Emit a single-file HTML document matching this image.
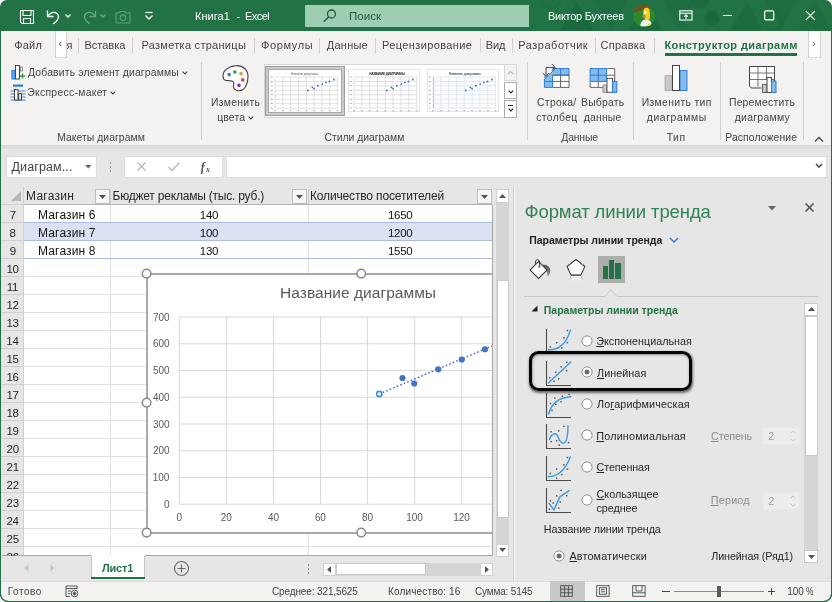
<!DOCTYPE html>
<html lang="ru"><head><meta charset="utf-8"><title>Excel</title>
<style>
html,body{margin:0;padding:0;}
body{width:832px;height:602px;position:relative;overflow:hidden;background:#fff;font-family:"Liberation Sans", sans-serif;}
#w div,#w span.t,#w svg{position:absolute;}
#w{position:absolute;left:0;top:0;width:832px;height:602px;overflow:hidden;will-change:transform;}
u{text-decoration:underline;text-underline-offset:1px;}
</style></head><body><div id="w">
<div style="left:0px;top:0px;width:832px;height:602px;background:#fff;"></div>
<div style="left:0px;top:0px;width:832px;height:31px;background:#217346;"></div>
<div style="left:0px;top:31px;width:832px;height:113.5px;background:#f3f2f1;"></div>
<div style="left:0px;top:144.5px;width:832px;height:5px;background:linear-gradient(#d6d6d6,#e6e6e6);"></div>
<div style="left:0px;top:149.5px;width:832px;height:432px;background:#e6e6e6;"></div>
<div style="left:0px;top:581px;width:832px;height:21px;background:#f3f2f1;"></div>
<svg style="left:19px;top:9px" width="16" height="16" viewBox="0 0 16 16" fill="none" stroke="#fff" stroke-width="1.1">
<path d="M1.5 1.5h13v13H3l-1.5-1.5z"/><path d="M4 1.5v5h8v-5"/><path d="M4.5 14.5v-5h7v5"/></svg>
<svg style="left:45px;top:8px" width="30" height="18" viewBox="0 0 30 18" fill="none" stroke="#fff" stroke-width="1.3">
<path d="M2.5 2.5v6h6"/><path d="M2.8 8.2C5 4.5 9 3.2 12 5.5c3 2.6 1.5 7-4 10.5"/><path d="M20.5 6.5l2.5 2.5 2.500-2.500" stroke-width="1.4"/></svg>
<svg style="left:80px;top:8px;opacity:.35" width="30" height="18" viewBox="0 0 30 18" fill="none" stroke="#fff" stroke-width="1.3">
<path d="M15.5 2.5v6h-6"/><path d="M15.200 8.2C13 4.5 9 3.2 6 5.5c-3 2.600-1.500 7 4 10.500"/><path d="M20.500 6.500l2.500 2.500 2.500-2.500" stroke-width="1.4"/></svg>
<svg style="left:115px;top:10px;opacity:.3" width="16" height="14" viewBox="0 0 16 14" fill="none" stroke="#fff" stroke-width="1.1">
<path d="M1 3h3l1-1.500h5L11 3h4v10H1z"/><circle cx="8" cy="7.700" r="2.800"/></svg>
<svg style="left:143px;top:11px" width="12" height="10" viewBox="0 0 12 10" fill="none" stroke="#fff" stroke-width="1.3">
<path d="M2.500 1.500h7"/><path d="M2.500 4.500l3.500 3.500 3.500-3.500"/></svg>
<span class="t" style="left:195.00px;top:8.00px;font-size:11px;line-height:16px;color:#fff;font-weight:400;letter-spacing:0.050px;white-space:pre;">Книга1</span>
<span class="t" style="left:236.50px;top:8.00px;font-size:11px;line-height:16px;color:#fff;font-weight:400;letter-spacing:0.000px;white-space:pre;">-</span>
<span class="t" style="left:245.00px;top:8.00px;font-size:11px;line-height:16px;color:#fff;font-weight:400;letter-spacing:-0.562px;white-space:pre;">Excel</span>
<svg style="left:520px;top:0" width="312" height="31" viewBox="520 0 312 31" fill="none">
<g fill="#1a663b" opacity=".8">
<path d="M560 31l17-29 17 29z"/><path d="M628 31l17-29 17 29z" opacity=".6"/><path d="M662 0l17 29 17-29z" opacity=".5"/>
<path d="M730 31l17-29 17 29z" opacity=".6"/><path d="M764 0l17 29 17-29z" opacity=".45"/><path d="M798 31l17-29 17 29z" opacity=".5"/>
<path d="M594 0l17 29 17-29z" opacity=".4"/>
<circle cx="712" cy="18" r="7.500"/><circle cx="700" cy="0" r="9" opacity=".6"/>
</g>
<circle cx="773" cy="21" r="9" stroke="#1b6a3e" stroke-width="2.500" opacity=".5"/>
<circle cx="551" cy="-2" r="10" stroke="#1b6a3e" stroke-width="2.500" opacity=".4"/>
</svg>
<div style="left:305px;top:5px;width:224px;height:22px;background:#9fcdb3;"></div>
<svg style="left:322px;top:8px" width="16" height="16" viewBox="0 0 16 16" fill="none" stroke="#1d5c3c" stroke-width="1.3">
<circle cx="9.500" cy="6" r="4"/><path d="M6.600 9L1.800 13.800"/></svg>
<span class="t" style="left:349.00px;top:8.00px;font-size:11.5px;line-height:16px;color:#1d5c3c;font-weight:400;letter-spacing:0.062px;white-space:pre;">Поиск</span>
<span class="t" style="left:548.00px;top:8.00px;font-size:11px;line-height:16px;color:#fff;font-weight:400;letter-spacing:-0.269px;white-space:pre;">Виктор Бухтеев</span>
<svg style="left:633px;top:5.200px" width="22" height="22" viewBox="0 0 22 22">
<defs><clipPath id="av"><circle cx="11" cy="11" r="10.900"/></clipPath></defs>
<g clip-path="url(#av)"><rect width="22" height="22" fill="#2c8a2c"/>
<path d="M0 0h22v5.500c-3-2-7-2.500-10-1.500S4 6.500 0 8z" fill="#7a4a25"/>
<ellipse cx="13.500" cy="7" rx="3.200" ry="4.200" fill="#f7d21f"/>
<path d="M10.300 8.500c0 3 1 5 3 6.500l3-.5c.8-2.500.8-5 .3-7z" fill="#f7d21f"/>
<ellipse cx="11" cy="11.300" rx="1.800" ry="1.500" fill="#b98a4a"/>
<circle cx="12.300" cy="7.600" r="1.300" fill="#fff"/>
<path d="M7.500 21.500c-.5-3.500 1.500-6.500 4.500-7l3.500.3c2.500 1.200 3.500 3.700 2.500 6.200z" fill="#f0f0f4"/>
<ellipse cx="16.200" cy="19.800" rx="1.700" ry="1.300" fill="#f7d21f"/></g></svg>
<svg style="left:679px;top:10px" width="14" height="11" viewBox="0 0 14 11" fill="none" stroke="#fff" stroke-width="1.100">
<rect x="0.800" y="0.800" width="12.200" height="9.200"/><path d="M0.800 3.200h12.200"/><path d="M7 8.800v-3.800M5.200 6.700l1.800-1.800 1.800 1.800"/></svg>
<div style="left:723.3px;top:14.6px;width:9px;height:1.2px;background:#fff;"></div>
<svg style="left:763px;top:9px" width="13" height="13" viewBox="0 0 13 13" fill="none" stroke="#fff" stroke-width="1.200"><rect x="1.700" y="1.900" width="9" height="9" rx="1"/></svg>
<svg style="left:804px;top:9px" width="13" height="13" viewBox="0 0 13 13" fill="none" stroke="#fff" stroke-width="1.200"><path d="M1.900 2.100l9 8.800M10.900 2.100l-9 8.800"/></svg>
<span class="t" style="left:14.25px;top:37.00px;font-size:11px;line-height:16px;color:#444;font-weight:400;letter-spacing:0.167px;white-space:pre;">Файл</span>
<span class="t" style="left:66.40px;top:37.00px;font-size:11px;line-height:16px;color:#444;font-weight:400;letter-spacing:0.000px;white-space:pre;">я</span>
<div style="left:55.3px;top:31px;width:12.2px;height:27.2px;background:#fff;box-sizing:border-box;border-left:1.300px solid #d0d0d0;border-right:1.300px solid #d0d0d0;border-bottom:1px solid #dcdcdc;"></div>
<span class="t" style="left:58.38px;top:35.00px;font-size:11px;line-height:16px;color:#555;font-weight:400;letter-spacing:0.000px;white-space:pre;">‹</span>
<div style="left:78px;top:38px;width:1px;height:15px;background:#d2d0ce;"></div>
<span class="t" style="left:84.50px;top:37.00px;font-size:11px;line-height:16px;color:#444;font-weight:400;letter-spacing:0.000px;white-space:pre;">Вставка</span>
<div style="left:132px;top:38px;width:1px;height:15px;background:#d2d0ce;"></div>
<span class="t" style="left:141.50px;top:37.00px;font-size:11px;line-height:16px;color:#444;font-weight:400;letter-spacing:0.281px;white-space:pre;">Разметка страницы</span>
<div style="left:254px;top:38px;width:1px;height:15px;background:#d2d0ce;"></div>
<span class="t" style="left:261.00px;top:37.00px;font-size:11px;line-height:16px;color:#444;font-weight:400;letter-spacing:0.625px;white-space:pre;">Формулы</span>
<div style="left:319px;top:38px;width:1px;height:15px;background:#d2d0ce;"></div>
<span class="t" style="left:326.75px;top:37.00px;font-size:11px;line-height:16px;color:#444;font-weight:400;letter-spacing:0.250px;white-space:pre;">Данные</span>
<div style="left:375px;top:38px;width:1px;height:15px;background:#d2d0ce;"></div>
<span class="t" style="left:382.00px;top:37.00px;font-size:11px;line-height:16px;color:#444;font-weight:400;letter-spacing:0.385px;white-space:pre;">Рецензирование</span>
<div style="left:480px;top:38px;width:1px;height:15px;background:#d2d0ce;"></div>
<span class="t" style="left:485.75px;top:37.00px;font-size:11px;line-height:16px;color:#444;font-weight:400;letter-spacing:-0.125px;white-space:pre;">Вид</span>
<div style="left:512px;top:38px;width:1px;height:15px;background:#d2d0ce;"></div>
<span class="t" style="left:518.25px;top:37.00px;font-size:11px;line-height:16px;color:#444;font-weight:400;letter-spacing:0.525px;white-space:pre;">Разработчик</span>
<div style="left:594.5px;top:38px;width:1px;height:15px;background:#d2d0ce;"></div>
<span class="t" style="left:600.50px;top:37.00px;font-size:11px;line-height:16px;color:#444;font-weight:400;letter-spacing:0.250px;white-space:pre;">Справка</span>
<div style="left:653.5px;top:38px;width:1px;height:15px;background:#d2d0ce;"></div>
<span class="t" style="left:664.50px;top:37.00px;font-size:11px;line-height:16px;color:#217346;font-weight:700;letter-spacing:0.408px;white-space:pre;">Конструктор диаграмм</span>
<div style="left:665px;top:53px;width:132px;height:3px;background:#217346;"></div>
<div style="left:808.3px;top:31px;width:12.4px;height:27.2px;background:#fff;box-sizing:border-box;border-left:1.300px solid #d0d0d0;border-right:1.300px solid #d0d0d0;border-bottom:1px solid #dcdcdc;"></div>
<span class="t" style="left:811.88px;top:35.00px;font-size:11px;line-height:16px;color:#555;font-weight:400;letter-spacing:0.000px;white-space:pre;">›</span>
<svg style="left:11px;top:63px" width="15" height="17" viewBox="0 0 15 17" fill="none">
<rect x="0.900" y="7.500" width="3.200" height="8.500" fill="#5aa6ec" stroke="#2b7cd3" stroke-width=".9"/><rect x="4.500" y="2.500" width="4" height="13.500" fill="#fff" stroke="#444" stroke-width="1"/>
<rect x="9.500" y="4" width="2" height="4" fill="#fff" stroke="#777" stroke-width=".8"/>
<path d="M11.500 10.500v5M9 13h5" stroke="#2e9e4b" stroke-width="1.300"/></svg>
<span class="t" style="left:28.00px;top:65.00px;font-size:10.4px;line-height:16px;color:#444;font-weight:400;letter-spacing:0.160px;white-space:pre;">Добавить элемент диаграммы</span>
<svg style="left:181.5px;top:70.5px" width="6" height="4" viewBox="0 0 6 4" fill="none" stroke="#444" stroke-width="1.100"><path d="M0.600 0.600l2.300 2.300 2.300-2.300"/></svg>
<svg style="left:10px;top:84px" width="16" height="17" viewBox="0 0 16 17" fill="none">
<rect x="3" y="0.500" width="10" height="2.200" fill="#2b7cd3"/>
<path d="M0.500 7h15M0.500 10h15M0.500 13h15M0.500 16h15" stroke="#2b7cd3" stroke-width=".9"/>
<rect x="4.500" y="5.500" width="3.500" height="10.500" fill="#fff" stroke="#444" stroke-width="1"/>
<rect x="8.500" y="9.500" width="3" height="6.500" fill="#ddd" stroke="#444" stroke-width="1"/></svg>
<span class="t" style="left:27.25px;top:85.00px;font-size:10.4px;line-height:16px;color:#444;font-weight:400;letter-spacing:0.288px;white-space:pre;">Экспресс-макет</span>
<svg style="left:110.0px;top:90.5px" width="6" height="4" viewBox="0 0 6 4" fill="none" stroke="#444" stroke-width="1.100"><path d="M0.600 0.600l2.300 2.300 2.300-2.300"/></svg>
<span class="t" style="left:57.25px;top:130.00px;font-size:10.4px;line-height:16px;color:#444;font-weight:400;letter-spacing:0.036px;white-space:pre;">Макеты диаграмм</span>
<div style="left:201px;top:62px;width:1px;height:78px;background:#d2d0ce;"></div>
<svg style="left:220px;top:63px" width="30" height="30" viewBox="0 0 30 30" fill="none">
<path d="M3 13C3 8 8 3.200 16 2.700C23 2.300 28 7 28 13.500C28 20 25 27.500 19.500 27.700C16 27.800 13.500 26 13.500 23.500C13.500 21.500 14.500 20.500 13.500 19C12 17 8 18 5.500 17.300C3.800 16.800 3 15 3 13Z" fill="#fff" stroke="#444" stroke-width="1.100"/>
<circle cx="9.200" cy="11.600" r="1.800" fill="#2b7cd3"/><circle cx="14.900" cy="9" r="1.800" fill="#2e9e4b"/>
<circle cx="21" cy="10.700" r="1.800" fill="#e8912d"/><circle cx="22.800" cy="16.900" r="1.800" fill="#e8403a"/><circle cx="19" cy="22.400" r="1.800" fill="#8e2fb5"/></svg>
<span class="t" style="left:211.00px;top:95.00px;font-size:10.4px;line-height:16px;color:#444;font-weight:400;letter-spacing:0.286px;white-space:pre;">Изменить</span>
<span class="t" style="left:217.25px;top:110.00px;font-size:10.4px;line-height:16px;color:#444;font-weight:400;letter-spacing:0.125px;white-space:pre;">цвета</span>
<svg style="left:248.0px;top:115.5px" width="6" height="4" viewBox="0 0 6 4" fill="none" stroke="#444" stroke-width="1.100"><path d="M0.600 0.600l2.300 2.300 2.300-2.300"/></svg>
<div style="left:264px;top:64px;width:253px;height:54px;background:#fff;box-sizing:border-box;border:1px solid #d6d6d6;"></div>
<div style="left:265.0px;top:65.9px;width:79.7px;height:50px;background:#cbcbcb;box-sizing:border-box;border:1px solid #9c9c9c;"></div>
<div style="left:268.3px;top:68.8px;width:73.5px;height:44.1px;background:#fff;box-sizing:border-box;border:1px solid #a9a9a9;"></div>
<svg style="left:274.8px;top:76.5px;overflow:visible" width="62.6" height="31.1" viewBox="0 0 62.6 31.1"><g stroke="#d4d4d4" stroke-width=".7" fill="none"><path d="M0 0.00h62.6" /><path d="M0 4.44h62.6" /><path d="M0 8.89h62.6" /><path d="M0 13.33h62.6" /><path d="M0 17.77h62.6" /><path d="M0 22.21h62.6" /><path d="M0 26.66h62.6" /><path d="M0 31.10h62.6" /><path d="M0.00 0v31.1" /><path d="M7.83 0v31.1" /><path d="M15.65 0v31.1" /><path d="M23.48 0v31.1" /><path d="M31.30 0v31.1" /><path d="M39.12 0v31.1" /><path d="M46.95 0v31.1" /><path d="M54.77 0v31.1" /><path d="M62.60 0v31.1" /></g><rect x="-4.200" y="-0.40" width="2" height=".8" fill="#9a9a9a"/><rect x="-4.200" y="4.04" width="2" height=".8" fill="#9a9a9a"/><rect x="-4.200" y="8.49" width="2" height=".8" fill="#9a9a9a"/><rect x="-4.200" y="12.93" width="2" height=".8" fill="#9a9a9a"/><rect x="-4.200" y="17.37" width="2" height=".8" fill="#9a9a9a"/><rect x="-4.200" y="21.81" width="2" height=".8" fill="#9a9a9a"/><rect x="-4.200" y="26.26" width="2" height=".8" fill="#9a9a9a"/><rect x="-4.200" y="30.70" width="2" height=".8" fill="#9a9a9a"/><rect x="-1.00" y="33.4" width="2" height=".8" fill="#9a9a9a"/><rect x="6.83" y="33.4" width="2" height=".8" fill="#9a9a9a"/><rect x="14.65" y="33.4" width="2" height=".8" fill="#9a9a9a"/><rect x="22.48" y="33.4" width="2" height=".8" fill="#9a9a9a"/><rect x="30.30" y="33.4" width="2" height=".8" fill="#9a9a9a"/><rect x="38.12" y="33.4" width="2" height=".8" fill="#9a9a9a"/><rect x="45.95" y="33.4" width="2" height=".8" fill="#9a9a9a"/><rect x="53.77" y="33.4" width="2" height=".8" fill="#9a9a9a"/><rect x="61.60" y="33.4" width="2" height=".8" fill="#9a9a9a"/><circle cx="32.8" cy="13.5" r="0.950" fill="#4472c4"/><circle cx="37.4" cy="10.4" r="0.950" fill="#4472c4"/><circle cx="39.1" cy="11.6" r="0.950" fill="#4472c4"/><circle cx="42.8" cy="8.8" r="0.950" fill="#4472c4"/><circle cx="47.2" cy="7.1" r="0.950" fill="#4472c4"/><circle cx="50.9" cy="5.4" r="0.950" fill="#4472c4"/><circle cx="54.4" cy="4.5" r="0.950" fill="#4472c4"/><circle cx="58.9" cy="2.5" r="0.950" fill="#4472c4"/></svg>
<span class="t" style="left:290.85px;top:66.00px;font-size:3px;line-height:16px;color:#666;font-weight:400;letter-spacing:-0.147px;white-space:pre;line-height:6px;margin-top:5px;">Название диаграммы</span>
<div style="left:347.59999999999997px;top:69.3px;width:72px;height:42.8px;background:#fff;box-sizing:border-box;border:1px solid #e6e6e6;"></div>
<svg style="left:353.9px;top:76.5px;overflow:visible" width="62.6" height="31.1" viewBox="0 0 62.6 31.1"><g stroke="#d4d4d4" stroke-width=".7" fill="none"><path d="M0 0.00h62.6" /><path d="M0 4.44h62.6" /><path d="M0 8.89h62.6" /><path d="M0 13.33h62.6" /><path d="M0 17.77h62.6" /><path d="M0 22.21h62.6" /><path d="M0 26.66h62.6" /><path d="M0 31.10h62.6" /><path d="M0.00 0v31.1" /><path d="M7.83 0v31.1" /><path d="M15.65 0v31.1" /><path d="M23.48 0v31.1" /><path d="M31.30 0v31.1" /><path d="M39.12 0v31.1" /><path d="M46.95 0v31.1" /><path d="M54.77 0v31.1" /><path d="M62.60 0v31.1" /></g><rect x="-4.200" y="-0.40" width="2" height=".8" fill="#9a9a9a"/><rect x="-4.200" y="4.04" width="2" height=".8" fill="#9a9a9a"/><rect x="-4.200" y="8.49" width="2" height=".8" fill="#9a9a9a"/><rect x="-4.200" y="12.93" width="2" height=".8" fill="#9a9a9a"/><rect x="-4.200" y="17.37" width="2" height=".8" fill="#9a9a9a"/><rect x="-4.200" y="21.81" width="2" height=".8" fill="#9a9a9a"/><rect x="-4.200" y="26.26" width="2" height=".8" fill="#9a9a9a"/><rect x="-4.200" y="30.70" width="2" height=".8" fill="#9a9a9a"/><rect x="-1.00" y="33.4" width="2" height=".8" fill="#9a9a9a"/><rect x="6.83" y="33.4" width="2" height=".8" fill="#9a9a9a"/><rect x="14.65" y="33.4" width="2" height=".8" fill="#9a9a9a"/><rect x="22.48" y="33.4" width="2" height=".8" fill="#9a9a9a"/><rect x="30.30" y="33.4" width="2" height=".8" fill="#9a9a9a"/><rect x="38.12" y="33.4" width="2" height=".8" fill="#9a9a9a"/><rect x="45.95" y="33.4" width="2" height=".8" fill="#9a9a9a"/><rect x="53.77" y="33.4" width="2" height=".8" fill="#9a9a9a"/><rect x="61.60" y="33.4" width="2" height=".8" fill="#9a9a9a"/><circle cx="32.8" cy="13.5" r="0.950" fill="#4472c4"/><circle cx="37.4" cy="10.4" r="0.950" fill="#4472c4"/><circle cx="39.1" cy="11.6" r="0.950" fill="#4472c4"/><circle cx="42.8" cy="8.8" r="0.950" fill="#4472c4"/><circle cx="47.2" cy="7.1" r="0.950" fill="#4472c4"/><circle cx="50.9" cy="5.4" r="0.950" fill="#4472c4"/><circle cx="54.4" cy="4.5" r="0.950" fill="#4472c4"/><circle cx="58.9" cy="2.5" r="0.950" fill="#4472c4"/></svg>
<span class="t" style="left:369.15px;top:66.00px;font-size:3px;line-height:16px;color:#222;font-weight:700;letter-spacing:-0.118px;white-space:pre;line-height:6px;margin-top:5px;">НАЗВАНИЕ ДИАГРАММЫ</span>
<div style="left:426.7px;top:69.3px;width:72px;height:42.8px;background:#fff;box-sizing:border-box;border:1px solid #e6e6e6;"></div>
<svg style="left:433px;top:76.5px;overflow:visible" width="62.6" height="31.1" viewBox="0 0 62.6 31.1"><rect width="62.6" height="31.1" fill="#fbfcfe"/><path d="M0.600 0v31.1" stroke="#8497b0" stroke-width=".7"/><g stroke="#dae0ea" stroke-width=".7" fill="none"><path d="M0 0.00h62.6" /><path d="M0 4.44h62.6" /><path d="M0 8.89h62.6" /><path d="M0 13.33h62.6" /><path d="M0 17.77h62.6" /><path d="M0 22.21h62.6" /><path d="M0 26.66h62.6" /><path d="M0 31.10h62.6" /><path d="M0.00 0v31.1" /><path d="M7.83 0v31.1" /><path d="M15.65 0v31.1" /><path d="M23.48 0v31.1" /><path d="M31.30 0v31.1" /><path d="M39.12 0v31.1" /><path d="M46.95 0v31.1" /><path d="M54.77 0v31.1" /><path d="M62.60 0v31.1" /></g><rect x="-4.200" y="-0.40" width="2" height=".8" fill="#9a9a9a"/><rect x="-4.200" y="4.04" width="2" height=".8" fill="#9a9a9a"/><rect x="-4.200" y="8.49" width="2" height=".8" fill="#9a9a9a"/><rect x="-4.200" y="12.93" width="2" height=".8" fill="#9a9a9a"/><rect x="-4.200" y="17.37" width="2" height=".8" fill="#9a9a9a"/><rect x="-4.200" y="21.81" width="2" height=".8" fill="#9a9a9a"/><rect x="-4.200" y="26.26" width="2" height=".8" fill="#9a9a9a"/><rect x="-4.200" y="30.70" width="2" height=".8" fill="#9a9a9a"/><rect x="-1.00" y="33.4" width="2" height=".8" fill="#9a9a9a"/><rect x="6.83" y="33.4" width="2" height=".8" fill="#9a9a9a"/><rect x="14.65" y="33.4" width="2" height=".8" fill="#9a9a9a"/><rect x="22.48" y="33.4" width="2" height=".8" fill="#9a9a9a"/><rect x="30.30" y="33.4" width="2" height=".8" fill="#9a9a9a"/><rect x="38.12" y="33.4" width="2" height=".8" fill="#9a9a9a"/><rect x="45.95" y="33.4" width="2" height=".8" fill="#9a9a9a"/><rect x="53.77" y="33.4" width="2" height=".8" fill="#9a9a9a"/><rect x="61.60" y="33.4" width="2" height=".8" fill="#9a9a9a"/><circle cx="32.8" cy="13.5" r="0.950" fill="#4472c4"/><circle cx="37.4" cy="10.4" r="0.950" fill="#4472c4"/><circle cx="39.1" cy="11.6" r="0.950" fill="#4472c4"/><circle cx="42.8" cy="8.8" r="0.950" fill="#4472c4"/><circle cx="47.2" cy="7.1" r="0.950" fill="#4472c4"/><circle cx="50.9" cy="5.4" r="0.950" fill="#4472c4"/><circle cx="54.4" cy="4.5" r="0.950" fill="#4472c4"/><circle cx="58.9" cy="2.5" r="0.950" fill="#4472c4"/></svg>
<span class="t" style="left:449.05px;top:66.00px;font-size:3px;line-height:16px;color:#44546a;font-weight:700;letter-spacing:-0.032px;white-space:pre;line-height:6px;margin-top:5px;">Название диаграммы</span>
<div style="left:504px;top:64px;width:13px;height:17px;background:#f3f2f1;box-sizing:border-box;border:1px solid #d6d6d6;"></div>
<div style="left:504px;top:82.3px;width:13px;height:17.2px;background:#fff;box-sizing:border-box;border:1px solid #ababab;"></div>
<div style="left:504px;top:100px;width:13px;height:18px;background:#fff;box-sizing:border-box;border:1px solid #ababab;"></div>
<svg style="left:507px;top:70px" width="7" height="5" viewBox="0 0 7 5" fill="none" stroke="#bbb" stroke-width="1.200"><path d="M0.800 4.200l2.700-2.700 2.700 2.700"/></svg>
<svg style="left:507.7px;top:89.8px" width="6" height="4" viewBox="0 0 6 4" fill="none" stroke="#222" stroke-width="1.100"><path d="M0.600 0.600l2.300 2.300 2.300-2.300"/></svg>
<div style="left:507.6px;top:104.5px;width:5.4px;height:1.3px;background:#222;"></div>
<svg style="left:507.7px;top:107.5px" width="6" height="4" viewBox="0 0 6 4" fill="none" stroke="#222" stroke-width="1.100"><path d="M0.600 0.600l2.300 2.300 2.300-2.300"/></svg>
<span class="t" style="left:324.50px;top:130.00px;font-size:10.4px;line-height:16px;color:#444;font-weight:400;letter-spacing:-0.019px;white-space:pre;">Стили диаграмм</span>
<div style="left:526.5px;top:62px;width:1px;height:78px;background:#d2d0ce;"></div>
<svg style="left:540px;top:62px" width="32" height="28" viewBox="540 62 32 28" fill="none">
<rect x="544.400" y="68.600" width="24.600" height="18.800" fill="#fff"/>
<path d="M544.400 68.600H555.500L544.400 79.500z" fill="#f3f2f1"/><path d="M552.600 68.600H569v6.600H552.600z" fill="#83bbea"/><path d="M544.400 75.200h8.200v12.200h-8.200z" fill="#83bbea"/>
<path d="M544.400 79.500L555.500 68.600H552.600V75.200H544.400z" fill="#83bbea"/>
<path d="M552.600 68.600H569V75.200H552.600M552.600 75.200V87.400M544.400 81.400H552.600M560.600 68.600V75.200M544.400 79V87.400H552.600" stroke="#2b7cd3" stroke-width="1"/>
<path d="M569 75.200V87.400H552.600M552.600 81.400H569M560.600 75.200V87.400M552.600 75.200H569" stroke="#666" stroke-width="1"/>
<path d="M544.400 79.500L555.500 68.600" stroke="#2b7cd3" stroke-width=".9"/>
<path d="M546 76.300V67.400H555M542.700 73l3.300 3.300 3.300-3.300M551.800 64.100l3.300 3.300-3.300 3.300" stroke="#444" stroke-width="1"/></svg>
<span class="t" style="left:537.00px;top:95.00px;font-size:10.4px;line-height:16px;color:#444;font-weight:400;letter-spacing:0.333px;white-space:pre;">Строка/</span>
<span class="t" style="left:536.25px;top:110.00px;font-size:10.4px;line-height:16px;color:#444;font-weight:400;letter-spacing:0.333px;white-space:pre;">столбец</span>
<svg style="left:588px;top:66px" width="32" height="28" viewBox="588 66 32 28" fill="none">
<rect x="590.100" y="68.600" width="24.600" height="18.800" fill="#fff"/>
<rect x="590.100" y="68.600" width="16.500" height="12.800" fill="#83bbea"/>
<path d="M606.600 68.600H614.700V87.400H590.100V81.400M606.600 75.200H614.700M598.300 81.400V87.400M606.600 81.400H614.700" stroke="#666" stroke-width="1"/>
<path d="M590.100 68.600H606.600V81.400H590.100zM598.300 68.600V81.400M590.100 75.200H606.600" stroke="#2b7cd3" stroke-width="1"/>
<rect x="603" y="85" width="4" height="7.300" fill="#c8c8c8" stroke="#8a8a8a" stroke-width=".9"/>
<rect x="607" y="78.400" width="5.600" height="13.900" fill="#fff" stroke="#555" stroke-width="1"/>
<rect x="612.600" y="81.400" width="4.200" height="10.900" fill="#83bbea" stroke="#2b7cd3" stroke-width="1"/></svg>
<span class="t" style="left:581.00px;top:95.00px;font-size:10.4px;line-height:16px;color:#444;font-weight:400;letter-spacing:0.200px;white-space:pre;">Выбрать</span>
<span class="t" style="left:583.75px;top:110.00px;font-size:10.4px;line-height:16px;color:#444;font-weight:400;letter-spacing:0.200px;white-space:pre;">данные</span>
<span class="t" style="left:561.25px;top:130.00px;font-size:10.4px;line-height:16px;color:#444;font-weight:400;letter-spacing:-0.150px;white-space:pre;">Данные</span>
<div style="left:633px;top:62px;width:1px;height:78px;background:#d2d0ce;"></div>
<svg style="left:664px;top:64px" width="24" height="28" viewBox="0 0 24 28" fill="none">
<rect x="1" y="11.700" width="7" height="14.800" fill="#c8c8c8" stroke="#a5a5a5" stroke-width=".8"/>
<rect x="16" y="6.500" width="7" height="20" fill="#83bbea" stroke="#2b7cd3" stroke-width="1"/>
<rect x="8.500" y="1.500" width="7" height="25" fill="#fff" stroke="#444" stroke-width="1"/></svg>
<span class="t" style="left:641.65px;top:95.00px;font-size:10.4px;line-height:16px;color:#444;font-weight:400;letter-spacing:0.345px;white-space:pre;">Изменить тип</span>
<span class="t" style="left:646.80px;top:110.00px;font-size:10.4px;line-height:16px;color:#444;font-weight:400;letter-spacing:0.575px;white-space:pre;">диаграммы</span>
<span class="t" style="left:666.75px;top:130.00px;font-size:10.4px;line-height:16px;color:#444;font-weight:400;letter-spacing:0.475px;white-space:pre;">Тип</span>
<div style="left:719.5px;top:62px;width:1px;height:78px;background:#d2d0ce;"></div>
<svg style="left:748px;top:65px" width="30" height="29" viewBox="0 0 30 29" fill="none">
<path d="M1.500 1.500h25v16l0 0h-19l-6 4z" fill="#fff"/>
<path d="M1.500 1.500h25v19M1.500 1.500v19.500l2 2h10" stroke="#444" stroke-width="1"/>
<path d="M1.500 8h25M1.500 14.500h25M10 1.500v20M18.500 1.500v13" stroke="#666" stroke-width=".9"/>
<rect x="14.500" y="19.500" width="4.500" height="8" fill="#c8c8c8" stroke="#666" stroke-width="1"/>
<rect x="19" y="12.500" width="4.500" height="15" fill="#fff" stroke="#444" stroke-width="1"/>
<rect x="23.500" y="16" width="4.500" height="11.500" fill="#83bbea" stroke="#2b7cd3" stroke-width="1"/></svg>
<span class="t" style="left:728.95px;top:95.00px;font-size:10.4px;line-height:16px;color:#444;font-weight:400;letter-spacing:0.220px;white-space:pre;">Переместить</span>
<span class="t" style="left:734.70px;top:110.00px;font-size:10.4px;line-height:16px;color:#444;font-weight:400;letter-spacing:0.300px;white-space:pre;">диаграмму</span>
<span class="t" style="left:725.25px;top:130.00px;font-size:10.4px;line-height:16px;color:#444;font-weight:400;letter-spacing:0.100px;white-space:pre;">Расположение</span>
<div style="left:803px;top:62px;width:1px;height:78px;background:#d2d0ce;"></div>
<svg style="left:813.500px;top:135.800px" width="10" height="7" viewBox="0 0 10 7" fill="none" stroke="#444" stroke-width="1.300"><path d="M1 5.500l4-4 4 4"/></svg>
<div style="left:6px;top:155.5px;width:91px;height:22px;background:#fff;box-sizing:border-box;border:1px solid #dcdcdc;"></div>
<span class="t" style="left:11.50px;top:159.00px;font-size:12.5px;line-height:16px;color:#444;font-weight:400;letter-spacing:0.117px;white-space:pre;">Диаграм...</span>
<svg style="left:84.500px;top:164.500px" width="7" height="4" viewBox="0 0 7 4"><path d="M0 0h6.500l-3.250 3.500z" fill="#666"/></svg>
<div style="left:109.5px;top:162px;width:1.5px;height:1.5px;background:#a0a0a0;"></div>
<div style="left:109.5px;top:166px;width:1.5px;height:1.5px;background:#a0a0a0;"></div>
<div style="left:109.5px;top:170px;width:1.5px;height:1.5px;background:#a0a0a0;"></div>
<div style="left:124px;top:155.5px;width:98.5px;height:22px;background:#fff;box-sizing:border-box;border:1px solid #dcdcdc;"></div>
<svg style="left:136px;top:161px" width="11" height="11" viewBox="0 0 11 11" fill="none" stroke="#b8b8b8" stroke-width="1.300"><path d="M1.500 1.500l8 8M9.500 1.500l-8 8"/></svg>
<svg style="left:167px;top:161px" width="14" height="11" viewBox="0 0 14 11" fill="none" stroke="#b8b8b8" stroke-width="1.300"><path d="M1.500 6l3.500 3.500L12.500 1.500"/></svg>
<span class="t" style="left:200.75px;top:159.00px;font-size:12px;line-height:16px;color:#555;font-weight:700;letter-spacing:0.000px;white-space:pre;font-style:italic;font-family:Liberation Serif,serif;">f</span>
<span class="t" style="left:206.12px;top:162.00px;font-size:8px;line-height:16px;color:#555;font-weight:700;letter-spacing:0.000px;white-space:pre;font-style:italic;font-family:Liberation Serif,serif;">x</span>
<div style="left:226px;top:155.5px;width:601px;height:22px;background:#fff;box-sizing:border-box;border:1px solid #dcdcdc;"></div>
<svg style="left:815px;top:163px" width="8" height="6" viewBox="0 0 8 6" fill="none" stroke="#444" stroke-width="1.400"><path d="M1 1l3 3 3-3"/></svg>
<div style="left:0px;top:187px;width:493px;height:369px;background:#fff;"></div>
<div style="left:0px;top:187px;width:493px;height:18px;background:#e6e6e6;"></div>
<div style="left:0px;top:187px;width:24px;height:369px;background:#e6e6e6;"></div>
<div style="left:24px;top:222.5px;width:468px;height:18px;background:#d9e1f2;"></div>
<div style="left:24px;top:204px;width:468px;height:1px;background:#e1e1e1;"></div>
<div style="left:0px;top:204px;width:24px;height:1px;background:#cfcfcf;"></div>
<div style="left:24px;top:222px;width:468px;height:1px;background:#e1e1e1;"></div>
<div style="left:0px;top:222px;width:24px;height:1px;background:#cfcfcf;"></div>
<div style="left:24px;top:240px;width:468px;height:1px;background:#e1e1e1;"></div>
<div style="left:0px;top:240px;width:24px;height:1px;background:#cfcfcf;"></div>
<div style="left:24px;top:258px;width:468px;height:1px;background:#e1e1e1;"></div>
<div style="left:0px;top:258px;width:24px;height:1px;background:#cfcfcf;"></div>
<div style="left:24px;top:276px;width:468px;height:1px;background:#e1e1e1;"></div>
<div style="left:0px;top:276px;width:24px;height:1px;background:#cfcfcf;"></div>
<div style="left:24px;top:294px;width:468px;height:1px;background:#e1e1e1;"></div>
<div style="left:0px;top:294px;width:24px;height:1px;background:#cfcfcf;"></div>
<div style="left:24px;top:312px;width:468px;height:1px;background:#e1e1e1;"></div>
<div style="left:0px;top:312px;width:24px;height:1px;background:#cfcfcf;"></div>
<div style="left:24px;top:330px;width:468px;height:1px;background:#e1e1e1;"></div>
<div style="left:0px;top:330px;width:24px;height:1px;background:#cfcfcf;"></div>
<div style="left:24px;top:348px;width:468px;height:1px;background:#e1e1e1;"></div>
<div style="left:0px;top:348px;width:24px;height:1px;background:#cfcfcf;"></div>
<div style="left:24px;top:366px;width:468px;height:1px;background:#e1e1e1;"></div>
<div style="left:0px;top:366px;width:24px;height:1px;background:#cfcfcf;"></div>
<div style="left:24px;top:384px;width:468px;height:1px;background:#e1e1e1;"></div>
<div style="left:0px;top:384px;width:24px;height:1px;background:#cfcfcf;"></div>
<div style="left:24px;top:402px;width:468px;height:1px;background:#e1e1e1;"></div>
<div style="left:0px;top:402px;width:24px;height:1px;background:#cfcfcf;"></div>
<div style="left:24px;top:420px;width:468px;height:1px;background:#e1e1e1;"></div>
<div style="left:0px;top:420px;width:24px;height:1px;background:#cfcfcf;"></div>
<div style="left:24px;top:438px;width:468px;height:1px;background:#e1e1e1;"></div>
<div style="left:0px;top:438px;width:24px;height:1px;background:#cfcfcf;"></div>
<div style="left:24px;top:456px;width:468px;height:1px;background:#e1e1e1;"></div>
<div style="left:0px;top:456px;width:24px;height:1px;background:#cfcfcf;"></div>
<div style="left:24px;top:474px;width:468px;height:1px;background:#e1e1e1;"></div>
<div style="left:0px;top:474px;width:24px;height:1px;background:#cfcfcf;"></div>
<div style="left:24px;top:492px;width:468px;height:1px;background:#e1e1e1;"></div>
<div style="left:0px;top:492px;width:24px;height:1px;background:#cfcfcf;"></div>
<div style="left:24px;top:510px;width:468px;height:1px;background:#e1e1e1;"></div>
<div style="left:0px;top:510px;width:24px;height:1px;background:#cfcfcf;"></div>
<div style="left:24px;top:528px;width:468px;height:1px;background:#e1e1e1;"></div>
<div style="left:0px;top:528px;width:24px;height:1px;background:#cfcfcf;"></div>
<div style="left:24px;top:546px;width:468px;height:1px;background:#e1e1e1;"></div>
<div style="left:0px;top:546px;width:24px;height:1px;background:#cfcfcf;"></div>
<div style="left:23.3px;top:187px;width:1px;height:369px;background:#cfcfcf;"></div>
<div style="left:110.4px;top:205px;width:1px;height:351px;background:#e1e1e1;"></div>
<div style="left:307.6px;top:205px;width:1px;height:351px;background:#e1e1e1;"></div>
<div style="left:110.4px;top:190px;width:1px;height:15px;background:#cfcfcf;"></div>
<div style="left:307.6px;top:190px;width:1px;height:15px;background:#cfcfcf;"></div>
<div style="left:24px;top:204px;width:468px;height:1px;background:#b4b4b4;"></div>
<div style="left:110.4px;top:223px;width:1px;height:18px;background:#d9e1f2;"></div>
<div style="left:307.6px;top:223px;width:1px;height:18px;background:#d9e1f2;"></div>
<div style="left:24px;top:222px;width:468px;height:1px;background:#a9bde4;"></div>
<div style="left:24px;top:240px;width:468px;height:1px;background:#a9bde4;"></div>
<div style="left:24px;top:258px;width:468px;height:1px;background:#a9bde4;"></div>
<div style="left:492px;top:205px;width:1px;height:351px;background:#a6a6a6;"></div>
<div style="left:2px;top:555px;width:491px;height:1px;background:#a6a6a6;"></div>
<svg style="left:10.800px;top:191.200px" width="10" height="10" viewBox="0 0 10 10"><path d="M10 0v10H0z" fill="#b7b7b7"/></svg>
<span class="t" style="left:26.00px;top:188.00px;font-size:12px;line-height:16px;color:#262626;font-weight:400;letter-spacing:0.250px;white-space:pre;">Магазин</span>
<span class="t" style="left:112.50px;top:188.00px;font-size:12px;line-height:16px;color:#262626;font-weight:400;letter-spacing:-0.210px;white-space:pre;">Бюджет рекламы (тыс. руб.)</span>
<span class="t" style="left:310.00px;top:188.00px;font-size:12px;line-height:16px;color:#262626;font-weight:400;letter-spacing:-0.155px;white-space:pre;">Количество посетителей</span>
<div style="left:94.5px;top:188.75px;width:15px;height:15px;background:#f4f6f9;box-sizing:border-box;border:1px solid #bdbdbd;"></div>
<svg style="left:98.5px;top:195px" width="7" height="4" viewBox="0 0 7 4"><path d="M0 0h7l-3.500 4z" fill="#555"/></svg>
<div style="left:292px;top:188.75px;width:15px;height:15px;background:#f4f6f9;box-sizing:border-box;border:1px solid #bdbdbd;"></div>
<svg style="left:296px;top:195px" width="7" height="4" viewBox="0 0 7 4"><path d="M0 0h7l-3.500 4z" fill="#555"/></svg>
<div style="left:476.5px;top:188.75px;width:15px;height:15px;background:#f4f6f9;box-sizing:border-box;border:1px solid #bdbdbd;"></div>
<svg style="left:480.5px;top:195px" width="7" height="4" viewBox="0 0 7 4"><path d="M0 0h7l-3.500 4z" fill="#555"/></svg>
<span class="t" style="left:9.68px;top:207.00px;font-size:11.5px;line-height:16px;color:#262626;font-weight:400;letter-spacing:0.000px;white-space:pre;">7</span>
<span class="t" style="left:9.55px;top:225.00px;font-size:11.5px;line-height:16px;color:#262626;font-weight:400;letter-spacing:0.000px;white-space:pre;">8</span>
<span class="t" style="left:9.68px;top:243.00px;font-size:11.5px;line-height:16px;color:#262626;font-weight:400;letter-spacing:0.000px;white-space:pre;">9</span>
<span class="t" style="left:6.45px;top:261.00px;font-size:11.5px;line-height:16px;color:#262626;font-weight:400;letter-spacing:-0.300px;white-space:pre;">10</span>
<span class="t" style="left:6.83px;top:279.00px;font-size:11.5px;line-height:16px;color:#262626;font-weight:400;letter-spacing:-0.300px;white-space:pre;">11</span>
<span class="t" style="left:6.45px;top:297.00px;font-size:11.5px;line-height:16px;color:#262626;font-weight:400;letter-spacing:-0.300px;white-space:pre;">12</span>
<span class="t" style="left:6.45px;top:315.00px;font-size:11.5px;line-height:16px;color:#262626;font-weight:400;letter-spacing:-0.300px;white-space:pre;">13</span>
<span class="t" style="left:6.33px;top:333.00px;font-size:11.5px;line-height:16px;color:#262626;font-weight:400;letter-spacing:-0.300px;white-space:pre;">14</span>
<span class="t" style="left:6.45px;top:351.00px;font-size:11.5px;line-height:16px;color:#262626;font-weight:400;letter-spacing:-0.300px;white-space:pre;">15</span>
<span class="t" style="left:6.45px;top:369.00px;font-size:11.5px;line-height:16px;color:#262626;font-weight:400;letter-spacing:-0.300px;white-space:pre;">16</span>
<span class="t" style="left:6.45px;top:387.00px;font-size:11.5px;line-height:16px;color:#262626;font-weight:400;letter-spacing:-0.300px;white-space:pre;">17</span>
<span class="t" style="left:6.45px;top:405.00px;font-size:11.5px;line-height:16px;color:#262626;font-weight:400;letter-spacing:-0.300px;white-space:pre;">18</span>
<span class="t" style="left:6.45px;top:423.00px;font-size:11.5px;line-height:16px;color:#262626;font-weight:400;letter-spacing:-0.300px;white-space:pre;">19</span>
<span class="t" style="left:6.58px;top:441.00px;font-size:11.5px;line-height:16px;color:#262626;font-weight:400;letter-spacing:-0.300px;white-space:pre;">20</span>
<span class="t" style="left:6.58px;top:459.00px;font-size:11.5px;line-height:16px;color:#262626;font-weight:400;letter-spacing:-0.300px;white-space:pre;">21</span>
<span class="t" style="left:6.58px;top:477.00px;font-size:11.5px;line-height:16px;color:#262626;font-weight:400;letter-spacing:-0.300px;white-space:pre;">22</span>
<span class="t" style="left:6.58px;top:495.00px;font-size:11.5px;line-height:16px;color:#262626;font-weight:400;letter-spacing:-0.300px;white-space:pre;">23</span>
<span class="t" style="left:6.45px;top:513.00px;font-size:11.5px;line-height:16px;color:#262626;font-weight:400;letter-spacing:-0.300px;white-space:pre;">24</span>
<span class="t" style="left:6.58px;top:531.00px;font-size:11.5px;line-height:16px;color:#262626;font-weight:400;letter-spacing:-0.300px;white-space:pre;">25</span>
<span class="t" style="left:6.58px;top:549.00px;font-size:11.5px;line-height:16px;color:#262626;font-weight:400;letter-spacing:-0.300px;white-space:pre;clip-path:inset(0 0 9px 0);">26</span>
<span class="t" style="left:38.00px;top:207.00px;font-size:12px;line-height:16px;color:#111;font-weight:400;letter-spacing:0.156px;white-space:pre;">Магазин 6</span>
<span class="t" style="left:199.80px;top:207.00px;font-size:11.5px;line-height:16px;color:#111;font-weight:400;letter-spacing:-0.250px;white-space:pre;">140</span>
<span class="t" style="left:387.88px;top:207.00px;font-size:11.5px;line-height:16px;color:#111;font-weight:400;letter-spacing:-0.250px;white-space:pre;">1650</span>
<span class="t" style="left:38.00px;top:225.00px;font-size:12px;line-height:16px;color:#111;font-weight:400;letter-spacing:0.156px;white-space:pre;">Магазин 7</span>
<span class="t" style="left:199.80px;top:225.00px;font-size:11.5px;line-height:16px;color:#111;font-weight:400;letter-spacing:-0.250px;white-space:pre;">100</span>
<span class="t" style="left:387.88px;top:225.00px;font-size:11.5px;line-height:16px;color:#111;font-weight:400;letter-spacing:-0.250px;white-space:pre;">1200</span>
<span class="t" style="left:38.00px;top:243.00px;font-size:12px;line-height:16px;color:#111;font-weight:400;letter-spacing:0.156px;white-space:pre;">Магазин 8</span>
<span class="t" style="left:199.80px;top:243.00px;font-size:11.5px;line-height:16px;color:#111;font-weight:400;letter-spacing:-0.250px;white-space:pre;">130</span>
<span class="t" style="left:387.88px;top:243.00px;font-size:11.5px;line-height:16px;color:#111;font-weight:400;letter-spacing:-0.250px;white-space:pre;">1550</span>
<div style="left:146px;top:273px;width:347px;height:260px;background:#fff;"></div>
<div style="left:146px;top:273px;width:347px;height:1.5px;background:#a9a9a9;"></div>
<div style="left:146px;top:532px;width:347px;height:1.5px;background:#a9a9a9;"></div>
<div style="left:146px;top:273px;width:1.5px;height:260px;background:#a9a9a9;"></div>
<svg style="left:0;top:0;" width="832" height="602" viewBox="0 0 832 602"><defs><clipPath id="cc"><rect x="146" y="273" width="346" height="260"/></clipPath></defs><g clip-path="url(#cc)"><path d="M179.25 317.00H492" stroke="#d9d9d9" stroke-width="1" fill="none"/><path d="M179.25 343.75H492" stroke="#d9d9d9" stroke-width="1" fill="none"/><path d="M179.25 370.50H492" stroke="#d9d9d9" stroke-width="1" fill="none"/><path d="M179.25 397.25H492" stroke="#d9d9d9" stroke-width="1" fill="none"/><path d="M179.25 424.00H492" stroke="#d9d9d9" stroke-width="1" fill="none"/><path d="M179.25 450.75H492" stroke="#d9d9d9" stroke-width="1" fill="none"/><path d="M179.25 477.50H492" stroke="#d9d9d9" stroke-width="1" fill="none"/><path d="M179.25 504.25H492" stroke="#d9d9d9" stroke-width="1" fill="none"/><path d="M179.25 317.0V504.25" stroke="#d9d9d9" stroke-width="1" fill="none"/><path d="M226.33 317.0V504.25" stroke="#d9d9d9" stroke-width="1" fill="none"/><path d="M273.41 317.0V504.25" stroke="#d9d9d9" stroke-width="1" fill="none"/><path d="M320.49 317.0V504.25" stroke="#d9d9d9" stroke-width="1" fill="none"/><path d="M367.57 317.0V504.25" stroke="#d9d9d9" stroke-width="1" fill="none"/><path d="M414.65 317.0V504.25" stroke="#d9d9d9" stroke-width="1" fill="none"/><path d="M461.73 317.0V504.25" stroke="#d9d9d9" stroke-width="1" fill="none"/><path d="M379.250 394L494 345.200" stroke="#4472c4" stroke-width="1.500" stroke-dasharray="1.600 2.200" fill="none"/><circle cx="402.5" cy="378" r="3.100" fill="#4472c4"/><circle cx="414.25" cy="383.5" r="3.100" fill="#4472c4"/><circle cx="438.25" cy="369.25" r="3.100" fill="#4472c4"/><circle cx="461.75" cy="359.5" r="3.100" fill="#4472c4"/><circle cx="485" cy="349.25" r="3.100" fill="#4472c4"/><circle cx="379.250" cy="394" r="2.600" fill="#fff" stroke="#3d8edb" stroke-width="1.600"/></g><circle cx="146.6" cy="273.6" r="4.300" fill="#fff" stroke="#8a8a8a" stroke-width="1.500"/><circle cx="361.25" cy="273.6" r="4.300" fill="#fff" stroke="#8a8a8a" stroke-width="1.500"/><circle cx="146.6" cy="402.6" r="4.300" fill="#fff" stroke="#8a8a8a" stroke-width="1.500"/><circle cx="146.6" cy="532.6" r="4.300" fill="#fff" stroke="#8a8a8a" stroke-width="1.500"/><circle cx="361.25" cy="532.6" r="4.300" fill="#fff" stroke="#8a8a8a" stroke-width="1.500"/></svg>
<span class="t" style="left:280.05px;top:285.00px;font-size:15.5px;line-height:16px;color:#595959;font-weight:400;letter-spacing:0.041px;white-space:pre;">Название диаграммы</span>
<div style="left:492px;top:273px;width:1px;height:283px;background:#a6a6a6;"></div>
<span class="t" style="left:152.97px;top:310.00px;font-size:10px;line-height:16px;color:#595959;font-weight:400;letter-spacing:-0.100px;white-space:pre;">700</span>
<span class="t" style="left:152.97px;top:336.00px;font-size:10px;line-height:16px;color:#595959;font-weight:400;letter-spacing:-0.100px;white-space:pre;">600</span>
<span class="t" style="left:152.97px;top:363.00px;font-size:10px;line-height:16px;color:#595959;font-weight:400;letter-spacing:-0.100px;white-space:pre;">500</span>
<span class="t" style="left:153.10px;top:390.00px;font-size:10px;line-height:16px;color:#595959;font-weight:400;letter-spacing:-0.100px;white-space:pre;">400</span>
<span class="t" style="left:152.97px;top:417.00px;font-size:10px;line-height:16px;color:#595959;font-weight:400;letter-spacing:-0.100px;white-space:pre;">300</span>
<span class="t" style="left:152.97px;top:443.00px;font-size:10px;line-height:16px;color:#595959;font-weight:400;letter-spacing:-0.100px;white-space:pre;">200</span>
<span class="t" style="left:152.85px;top:470.00px;font-size:10px;line-height:16px;color:#595959;font-weight:400;letter-spacing:-0.100px;white-space:pre;">100</span>
<span class="t" style="left:163.88px;top:497.00px;font-size:10px;line-height:16px;color:#595959;font-weight:400;letter-spacing:0.000px;white-space:pre;">0</span>
<span class="t" style="left:176.38px;top:510.00px;font-size:10px;line-height:16px;color:#595959;font-weight:400;letter-spacing:0.000px;white-space:pre;">0</span>
<span class="t" style="left:220.75px;top:510.00px;font-size:10px;line-height:16px;color:#595959;font-weight:400;letter-spacing:-0.100px;white-space:pre;">20</span>
<span class="t" style="left:267.96px;top:510.00px;font-size:10px;line-height:16px;color:#595959;font-weight:400;letter-spacing:-0.100px;white-space:pre;">40</span>
<span class="t" style="left:314.92px;top:510.00px;font-size:10px;line-height:16px;color:#595959;font-weight:400;letter-spacing:-0.100px;white-space:pre;">60</span>
<span class="t" style="left:362.00px;top:510.00px;font-size:10px;line-height:16px;color:#595959;font-weight:400;letter-spacing:-0.100px;white-space:pre;">80</span>
<span class="t" style="left:406.25px;top:510.00px;font-size:10px;line-height:16px;color:#595959;font-weight:400;letter-spacing:-0.100px;white-space:pre;">100</span>
<span class="t" style="left:453.33px;top:510.00px;font-size:10px;line-height:16px;color:#595959;font-weight:400;letter-spacing:-0.100px;white-space:pre;">120</span>
<div style="left:496px;top:203px;width:13px;height:341px;background:#d4d4d4;"></div>
<div style="left:496px;top:189px;width:13px;height:14px;background:#fff;box-sizing:border-box;border:1px solid #d0d0d0;"></div>
<svg style="left:499px;top:194px" width="7" height="4" viewBox="0 0 7 4"><path d="M0 4h7l-3.500-4z" fill="#555"/></svg>
<div style="left:496.5px;top:279.5px;width:12px;height:238px;background:#fff;box-sizing:border-box;border:1px solid #c9c9c9;"></div>
<div style="left:496px;top:543.5px;width:13px;height:13px;background:#fff;box-sizing:border-box;border:1px solid #d0d0d0;"></div>
<svg style="left:499px;top:548px" width="7" height="4" viewBox="0 0 7 4"><path d="M0 0h7l-3.500 4z" fill="#555"/></svg>
<div style="left:91px;top:555px;width:53.5px;height:23px;background:#fff;"></div>
<div style="left:91px;top:577px;width:53.5px;height:2px;background:#217346;"></div>
<div style="left:90.5px;top:556px;width:1px;height:21px;background:#c4c4c4;"></div>
<div style="left:144px;top:556px;width:1px;height:21px;background:#c4c4c4;"></div>
<span class="t" style="left:102.00px;top:560.00px;font-size:11px;line-height:16px;color:#217346;font-weight:700;letter-spacing:-0.188px;white-space:pre;">Лист1</span>
<svg style="left:24px;top:564px" width="5" height="8" viewBox="0 0 5 8"><path d="M4.500 0.500v7l-4-3.500z" fill="#c6c6c6"/></svg>
<svg style="left:50px;top:564px" width="5" height="8" viewBox="0 0 5 8"><path d="M0.500 0.500v7l4-3.500z" fill="#c6c6c6"/></svg>
<svg style="left:172.750px;top:560.250px" width="17" height="17" viewBox="0 0 17 17" fill="none" stroke="#6a6a6a" stroke-width="1.100"><circle cx="8.500" cy="8.500" r="7"/><path d="M8.500 4.500v8M4.500 8.500h8"/></svg>
<div style="left:307.5px;top:564px;width:1.5px;height:1.5px;background:#909090;"></div>
<div style="left:307.5px;top:568px;width:1.5px;height:1.5px;background:#909090;"></div>
<div style="left:307.5px;top:572px;width:1.5px;height:1.5px;background:#909090;"></div>
<div style="left:323px;top:562.5px;width:170px;height:13px;background:#d4d4d4;"></div>
<div style="left:323px;top:562.5px;width:13px;height:13px;background:#fff;box-sizing:border-box;border:1px solid #d0d0d0;"></div>
<svg style="left:327px;top:565.500px" width="4" height="7" viewBox="0 0 4 7"><path d="M4 0v7l-4-3.500z" fill="#555"/></svg>
<div style="left:336px;top:563px;width:89.5px;height:12px;background:#fff;box-sizing:border-box;border:1px solid #c9c9c9;"></div>
<div style="left:480px;top:562.5px;width:13px;height:13px;background:#fff;box-sizing:border-box;border:1px solid #d0d0d0;"></div>
<svg style="left:485px;top:565.500px" width="4" height="7" viewBox="0 0 4 7"><path d="M0 0v7l4-3.500z" fill="#555"/></svg>
<div style="left:512.5px;top:187px;width:1px;height:394px;background:#d0d0d0;"></div>
<div style="left:513.5px;top:187px;width:1px;height:394px;background:#f2f2f2;"></div>
<span class="t" style="left:524.50px;top:204.00px;font-size:18.5px;line-height:16px;color:#318256;font-weight:400;letter-spacing:-0.111px;white-space:pre;">Формат линии тренда</span>
<svg style="left:768px;top:205.500px" width="8" height="5" viewBox="0 0 8 5"><path d="M0 0h8l-4 4.500z" fill="#666"/></svg>
<svg style="left:804px;top:202px" width="11" height="11" viewBox="0 0 11 11" fill="none" stroke="#555" stroke-width="1.700"><path d="M1.500 1.500l8 8M9.500 1.500l-8 8"/></svg>
<span class="t" style="left:529.25px;top:232.00px;font-size:10.5px;line-height:16px;color:#222;font-weight:700;letter-spacing:-0.048px;white-space:pre;">Параметры линии тренда</span>
<svg style="left:669px;top:237px" width="10" height="7" viewBox="0 0 10 7" fill="none" stroke="#2b7cd3" stroke-width="1.300"><path d="M1 1l4 4 4-4"/></svg>
<svg style="left:526px;top:256px" width="28" height="26" viewBox="526 256 28 26" fill="none">
<defs><linearGradient id="pg" x1="0" y1="0" x2="0" y2="1"><stop offset="0" stop-color="#555"/><stop offset="1" stop-color="#999"/></linearGradient></defs>
<path d="M542.500 264.800C546.500 264.600 550 266.500 550.400 270C550.700 272.500 549 274.500 547.800 277.300C547.600 274 547 272 545.500 270z" fill="url(#pg)"/>
<path d="M538.500 261.500L547.100 270L538.500 278.500L530 270z" fill="#fff" stroke="#444" stroke-width="1.100"/>
<path d="M535.400 264.500V262a2.100 2.300 0 0 1 4.200 0V266" stroke="#444" stroke-width="1"/>
<circle cx="539.300" cy="266.500" r="1" fill="#444"/></svg>
<svg style="left:564px;top:256px" width="24" height="26" viewBox="564 256 24 26" fill="none">
<path d="M571 276L569.500 280.300H582.500L581 276z" fill="#f3f3f3"/>
<path d="M571 276L569.700 280M581 276L582.300 280" stroke="#b5b5b5" stroke-width=".9"/>
<path d="M576 259.500L584.800 266.500L580.900 275.100H571L567 266.500z" fill="#fff" stroke="#444" stroke-width="1.100" stroke-linejoin="round"/>
<path d="M571 275.300H580.900" stroke="#666" stroke-width="1.400"/></svg>
<div style="left:598px;top:256.3px;width:27.2px;height:26.7px;background:#adadad;"></div>
<div style="left:602.7px;top:265.6px;width:5.5px;height:13.2px;background:#217346;"></div>
<div style="left:609px;top:259.9px;width:5.3px;height:18.9px;background:#217346;"></div>
<div style="left:615.4px;top:262.8px;width:5.5px;height:16px;background:#217346;"></div>
<svg style="left:524px;top:288px" width="296" height="10" viewBox="0 0 296 10" fill="none"><path d="M0 8.500h81l6-6.500 6 6.500h201.500" stroke="#c6c6c6" stroke-width="1"/></svg>
<svg style="left:531px;top:305px" width="7" height="7" viewBox="0 0 7 7"><path d="M6.500 0.500v6H0.500z" fill="#222"/></svg>
<span class="t" style="left:543.75px;top:302.00px;font-size:10.5px;line-height:16px;color:#217346;font-weight:700;letter-spacing:0.000px;white-space:pre;">Параметры линии тренда</span>
<svg style="left:544px;top:329.25px;overflow:visible" width="30" height="27" viewBox="0 0 30 27" fill="none"><path d="M2.500 0V24.500H27" stroke="#4a4a4a" stroke-width="1.100"/><rect x="5.55" y="17.05" width="1.500" height="1.500" fill="#5a5a5a"/><rect x="11.95" y="12.95" width="1.500" height="1.500" fill="#5a5a5a"/><rect x="17.05" y="18.15" width="1.500" height="1.500" fill="#5a5a5a"/><rect x="19.15" y="8.05" width="1.500" height="1.500" fill="#5a5a5a"/><rect x="22.65" y="12.95" width="1.500" height="1.500" fill="#5a5a5a"/><rect x="22.65" y="0.75" width="1.500" height="1.500" fill="#5a5a5a"/><path d="M4.200 20.700C12 21.500 22 17 26.300 1.100" stroke="#3a9ae0" stroke-width="1.400" stroke-linecap="round" stroke-linejoin="round"/></svg>
<svg style="left:580.2px;top:333.9px" width="14" height="14" viewBox="0 0 14 14"><circle cx="7" cy="7" r="5.100" fill="#fff" stroke="#8e8e8e" stroke-width="1"/></svg>
<span class="t" style="left:596.25px;top:333.00px;font-size:10.75px;line-height:16px;color:#262626;font-weight:400;letter-spacing:0.017px;white-space:pre;"><u>Э</u>кспоненциальная</span>
<div style="left:528.75px;top:350.5px;width:162.75px;height:40.5px;box-sizing:border-box;border:3.600px solid #060606;border-radius:9.500px;box-shadow:0.500px 1.500px 2.500px rgba(0,0,0,.55), inset 0.500px 1px 2.500px rgba(0,0,0,.4);"></div>
<svg style="left:544px;top:361px;overflow:visible" width="30" height="27" viewBox="0 0 30 27" fill="none"><path d="M2.500 0V24.500H27" stroke="#4a4a4a" stroke-width="1.100"/><rect x="4.95" y="16.05" width="1.500" height="1.500" fill="#5a5a5a"/><rect x="9.25" y="19.55" width="1.500" height="1.500" fill="#5a5a5a"/><rect x="11.05" y="10.55" width="1.500" height="1.500" fill="#5a5a5a"/><rect x="13.95" y="16.95" width="1.500" height="1.500" fill="#5a5a5a"/><rect x="16.45" y="5.05" width="1.500" height="1.500" fill="#5a5a5a"/><rect x="21.85" y="8.85" width="1.500" height="1.500" fill="#5a5a5a"/><rect x="22.05" y="0.55" width="1.500" height="1.500" fill="#5a5a5a"/><path d="M4.600 21.700L26.900 0.900" stroke="#3a9ae0" stroke-width="1.400" stroke-linecap="round" stroke-linejoin="round"/></svg>
<svg style="left:580.2px;top:365.4px" width="14" height="14" viewBox="0 0 14 14"><circle cx="7" cy="7" r="5.100" fill="#fff" stroke="#8e8e8e" stroke-width="1"/><circle cx="7" cy="7" r="2.500" fill="#6a6a6a"/></svg>
<span class="t" style="left:597.00px;top:365.00px;font-size:10.75px;line-height:16px;color:#262626;font-weight:400;letter-spacing:0.071px;white-space:pre;"><u>Л</u>инейная</span>
<svg style="left:544px;top:392.5px;overflow:visible" width="30" height="27" viewBox="0 0 30 27" fill="none"><path d="M2.500 0V24.500H27" stroke="#4a4a4a" stroke-width="1.100"/><rect x="5.75" y="9.75" width="1.500" height="1.500" fill="#5a5a5a"/><rect x="7.25" y="16.75" width="1.500" height="1.500" fill="#5a5a5a"/><rect x="10.05" y="4.35" width="1.500" height="1.500" fill="#5a5a5a"/><rect x="11.05" y="10.55" width="1.500" height="1.500" fill="#5a5a5a"/><rect x="16.25" y="8.05" width="1.500" height="1.500" fill="#5a5a5a"/><rect x="17.45" y="2.45" width="1.500" height="1.500" fill="#5a5a5a"/><rect x="24.35" y="0.75" width="1.500" height="1.500" fill="#5a5a5a"/><path d="M4.600 21C7.500 10 15 4.500 26.900 3.800" stroke="#3a9ae0" stroke-width="1.400" stroke-linecap="round" stroke-linejoin="round"/></svg>
<svg style="left:580.2px;top:396.7px" width="14" height="14" viewBox="0 0 14 14"><circle cx="7" cy="7" r="5.100" fill="#fff" stroke="#8e8e8e" stroke-width="1"/></svg>
<span class="t" style="left:597.00px;top:396.00px;font-size:10.75px;line-height:16px;color:#262626;font-weight:400;letter-spacing:0.143px;white-space:pre;">Ло<u>г</u>арифмическая</span>
<svg style="left:544px;top:424px;overflow:visible" width="30" height="27" viewBox="0 0 30 27" fill="none"><path d="M2.500 0V24.500H27" stroke="#4a4a4a" stroke-width="1.100"/><rect x="6.35" y="6.95" width="1.500" height="1.500" fill="#5a5a5a"/><rect x="6.35" y="16.85" width="1.500" height="1.500" fill="#5a5a5a"/><rect x="11.95" y="16.05" width="1.500" height="1.500" fill="#5a5a5a"/><rect x="13.95" y="6.15" width="1.500" height="1.500" fill="#5a5a5a"/><rect x="14.55" y="20.35" width="1.500" height="1.500" fill="#5a5a5a"/><rect x="19.15" y="1.55" width="1.500" height="1.500" fill="#5a5a5a"/><rect x="23.85" y="17.85" width="1.500" height="1.500" fill="#5a5a5a"/><path d="M5.400 15.400C7 11 9.500 9.500 11.500 9.800C14.500 10.300 14.500 19 19.300 19.100C23 19.200 24 10 24 1.700" stroke="#3a9ae0" stroke-width="1.400" stroke-linecap="round" stroke-linejoin="round"/></svg>
<svg style="left:580.2px;top:428.3px" width="14" height="14" viewBox="0 0 14 14"><circle cx="7" cy="7" r="5.100" fill="#fff" stroke="#8e8e8e" stroke-width="1"/></svg>
<span class="t" style="left:596.25px;top:428.00px;font-size:10.75px;line-height:16px;color:#262626;font-weight:400;letter-spacing:0.212px;white-space:pre;"><u>П</u>олиномиальная</span>
<svg style="left:544px;top:455.5px;overflow:visible" width="30" height="27" viewBox="0 0 30 27" fill="none"><path d="M2.500 0V24.500H27" stroke="#4a4a4a" stroke-width="1.100"/><rect x="5.55" y="16.75" width="1.500" height="1.500" fill="#5a5a5a"/><rect x="11.95" y="12.35" width="1.500" height="1.500" fill="#5a5a5a"/><rect x="11.95" y="21.45" width="1.500" height="1.500" fill="#5a5a5a"/><rect x="17.05" y="17.85" width="1.500" height="1.500" fill="#5a5a5a"/><rect x="19.15" y="7.95" width="1.500" height="1.500" fill="#5a5a5a"/><rect x="22.65" y="12.35" width="1.500" height="1.500" fill="#5a5a5a"/><rect x="22.65" y="0.75" width="1.500" height="1.500" fill="#5a5a5a"/><path d="M4.200 20.700C13 20.500 21 15 26.300 0.900" stroke="#3a9ae0" stroke-width="1.400" stroke-linecap="round" stroke-linejoin="round"/></svg>
<svg style="left:580.2px;top:459.9px" width="14" height="14" viewBox="0 0 14 14"><circle cx="7" cy="7" r="5.100" fill="#fff" stroke="#8e8e8e" stroke-width="1"/></svg>
<span class="t" style="left:596.50px;top:459.00px;font-size:10.75px;line-height:16px;color:#262626;font-weight:400;letter-spacing:-0.094px;white-space:pre;"><u>С</u>тепенная</span>
<svg style="left:544px;top:488px;overflow:visible" width="30" height="27" viewBox="0 0 30 27" fill="none"><path d="M2.500 0V24.500H27" stroke="#4a4a4a" stroke-width="1.100"/><rect x="4.65" y="20.55" width="1.500" height="1.500" fill="#5a5a5a"/><rect x="5.75" y="12.05" width="1.500" height="1.500" fill="#5a5a5a"/><rect x="8.45" y="14.15" width="1.500" height="1.500" fill="#5a5a5a"/><rect x="11.95" y="7.15" width="1.500" height="1.500" fill="#5a5a5a"/><rect x="13.95" y="19.35" width="1.500" height="1.500" fill="#5a5a5a"/><rect x="15.45" y="13.25" width="1.500" height="1.500" fill="#5a5a5a"/><rect x="16.25" y="1.55" width="1.500" height="1.500" fill="#5a5a5a"/><rect x="22.05" y="6.95" width="1.500" height="1.500" fill="#5a5a5a"/><path d="M5.100 15.300L10 21.900L15.800 8.900L25.100 2.700" stroke="#3a9ae0" stroke-width="1.400" stroke-linecap="round" stroke-linejoin="round"/></svg>
<svg style="left:580.2px;top:493.2px" width="14" height="14" viewBox="0 0 14 14"><circle cx="7" cy="7" r="5.100" fill="#fff" stroke="#8e8e8e" stroke-width="1"/></svg>
<span class="t" style="left:596.50px;top:486.00px;font-size:10.75px;line-height:16px;color:#262626;font-weight:400;letter-spacing:0.028px;white-space:pre;"><u>С</u>кользящее</span>
<span class="t" style="left:596.50px;top:500.00px;font-size:10.75px;line-height:16px;color:#262626;font-weight:400;letter-spacing:-0.042px;white-space:pre;">среднее</span>
<span class="t" style="left:711.10px;top:428.00px;font-size:10.75px;line-height:16px;color:#8c8c8c;font-weight:400;letter-spacing:-0.133px;white-space:pre;"><u>С</u>тепень</span>
<span class="t" style="left:710.85px;top:492.00px;font-size:10.75px;line-height:16px;color:#8c8c8c;font-weight:400;letter-spacing:0.210px;white-space:pre;"><u>П</u>ериод</span>
<div style="left:763px;top:427.4px;width:37px;height:17.5px;background:#ededed;box-sizing:border-box;border:1px solid #e9e9e9;"></div>
<span class="t" style="left:768.25px;top:428.00px;font-size:10.75px;line-height:16px;color:#9a9a9a;font-weight:400;letter-spacing:0.000px;white-space:pre;">2</span>
<svg style="left:790px;top:430.4px" width="6" height="12" viewBox="0 0 6 12" fill="none" stroke="#c4c4c4" stroke-width="1"><path d="M0.700 3.200l2.300-2.300 2.300 2.300M0.700 8.800l2.300 2.300 2.300-2.300"/></svg>
<div style="left:763px;top:492px;width:37px;height:17.5px;background:#ededed;box-sizing:border-box;border:1px solid #e9e9e9;"></div>
<span class="t" style="left:768.25px;top:493.00px;font-size:10.75px;line-height:16px;color:#9a9a9a;font-weight:400;letter-spacing:0.000px;white-space:pre;">2</span>
<svg style="left:790px;top:495px" width="6" height="12" viewBox="0 0 6 12" fill="none" stroke="#c4c4c4" stroke-width="1"><path d="M0.700 3.200l2.300-2.300 2.300 2.300M0.700 8.800l2.300 2.300 2.300-2.300"/></svg>
<span class="t" style="left:543.75px;top:521.00px;font-size:10.75px;line-height:16px;color:#262626;font-weight:400;letter-spacing:-0.113px;white-space:pre;">Название линии тренда</span>
<svg style="left:552.25px;top:548.5px" width="14" height="14" viewBox="0 0 14 14"><circle cx="7" cy="7" r="5.100" fill="#fff" stroke="#8e8e8e" stroke-width="1"/><circle cx="7" cy="7" r="2.500" fill="#6a6a6a"/></svg>
<span class="t" style="left:569.50px;top:548.00px;font-size:10.75px;line-height:16px;color:#262626;font-weight:400;letter-spacing:0.167px;white-space:pre;"><u>А</u>втоматически</span>
<span class="t" style="left:711.30px;top:548.00px;font-size:10.75px;line-height:16px;color:#262626;font-weight:400;letter-spacing:-0.136px;white-space:pre;">Линейная (Ряд1)</span>
<div style="left:804px;top:315px;width:14px;height:236px;background:#d6d6d6;"></div>
<div style="left:804px;top:302.5px;width:14px;height:13px;background:#fff;box-sizing:border-box;border:1px solid #c9c9c9;"></div>
<svg style="left:807.500px;top:307px" width="7" height="4" viewBox="0 0 7 4"><path d="M0 4h7l-3.500-4z" fill="#555"/></svg>
<div style="left:804.5px;top:315.5px;width:13px;height:140px;background:#fff;box-sizing:border-box;border:1px solid #c9c9c9;"></div>
<div style="left:804px;top:550px;width:14px;height:13px;background:#fff;box-sizing:border-box;border:1px solid #c9c9c9;"></div>
<svg style="left:807.500px;top:555px" width="7" height="4" viewBox="0 0 7 4"><path d="M0 0h7l-3.500 4z" fill="#555"/></svg>
<div style="left:0px;top:580.5px;width:832px;height:1px;background:#dcdcdc;"></div>
<span class="t" style="left:7.75px;top:584.00px;font-size:10px;line-height:16px;color:#444;font-weight:400;letter-spacing:0.550px;white-space:pre;">Готово</span>
<svg style="left:65px;top:585px" width="14" height="13" viewBox="0 0 14 13" fill="none" stroke="#555" stroke-width="1">
<path d="M1 1h11v3M1 1v10.500h4"/><path d="M1 3.500h11"/><path d="M3 6h3M3 8.500h2"/><circle cx="9.500" cy="8.500" r="3.300"/><circle cx="9.500" cy="8.500" r="1.300" fill="#555"/></svg>
<span class="t" style="left:272.00px;top:584.00px;font-size:10px;line-height:16px;color:#444;font-weight:400;letter-spacing:-0.125px;white-space:pre;">Среднее: 321,5625</span>
<span class="t" style="left:388.00px;top:584.00px;font-size:10px;line-height:16px;color:#444;font-weight:400;letter-spacing:0.154px;white-space:pre;">Количество: 16</span>
<span class="t" style="left:475.00px;top:584.00px;font-size:10px;line-height:16px;color:#444;font-weight:400;letter-spacing:-0.175px;white-space:pre;">Сумма: 5145</span>
<div style="left:549.5px;top:581px;width:35px;height:19.5px;background:#c8c8c8;"></div>
<svg style="left:559.500px;top:585px" width="13" height="12" viewBox="0 0 13 12" fill="none" stroke="#4a4a4a" stroke-width=".9"><rect x="0.700" y="0.700" width="11.600" height="10.600"/><path d="M4.600 0.700v10.600M8.400 0.700v10.600M0.700 4.200h11.600M0.700 7.800h11.600"/></svg>
<svg style="left:595.700px;top:585px" width="14" height="12" viewBox="0 0 14 12" fill="none" stroke="#4a4a4a" stroke-width=".9"><rect x="0.700" y="0.700" width="12.400" height="10.600"/><rect x="3.400" y="2.800" width="7" height="6.400"/><path d="M5 4.800h3.800M5 6.800h3.800"/></svg>
<svg style="left:632px;top:585px" width="14" height="12" viewBox="0 0 14 12" fill="none" stroke="#4a4a4a" stroke-width=".9"><rect x="0.700" y="0.700" width="12.400" height="10.600"/><path d="M4 0.700v5.300h6V0.700M0.700 7.800h12.400"/></svg>
<div style="left:662px;top:591px;width:7.5px;height:1.2px;background:#444;"></div>
<div style="left:674px;top:591.3px;width:90px;height:1px;background:#8a8a8a;"></div>
<div style="left:717.3px;top:586px;width:3.7px;height:10.5px;background:#5a5a5a;"></div>
<div style="left:767.5px;top:591px;width:7.5px;height:1.1px;background:#444;"></div>
<div style="left:770.7px;top:587.8px;width:1.1px;height:7.5px;background:#444;"></div>
<span class="t" style="left:787.15px;top:584.00px;font-size:10px;line-height:16px;color:#444;font-weight:400;letter-spacing:-0.050px;white-space:pre;">100</span>
<span class="t" style="left:806.39px;top:584.00px;font-size:10px;line-height:16px;color:#444;font-weight:400;letter-spacing:0.000px;white-space:pre;transform:scaleX(.84);transform-origin:0 50%;">%</span>
<div style="left:0px;top:31px;width:1.2px;height:571px;background:#217346;"></div>
<div style="left:830.9px;top:31px;width:1.1px;height:571px;background:#217346;"></div>
<div style="left:0px;top:600.9px;width:832px;height:1.1px;background:#217346;"></div>
<svg style="left:0;top:0" width="832" height="602" viewBox="0 0 832 602" fill="none">
<path d="M0 0h7A7 7 0 0 0 0 7z" fill="#fff"/><path d="M832 0h-7a7 7 0 0 1 7 7z" fill="#fff"/>
<path d="M0 602h8a8 8 0 0 1-8-8z" fill="#fff"/><path d="M832 602h-8a8 8 0 0 0 8-8z" fill="#fff"/>
<path d="M0.600 594a7.400 7.400 0 0 0 7.400 7.400" stroke="#217346" stroke-width="1.300"/>
<path d="M831.400 594a7.400 7.400 0 0 1-7.400 7.400" stroke="#217346" stroke-width="1.300"/></svg>
</div></body></html>
